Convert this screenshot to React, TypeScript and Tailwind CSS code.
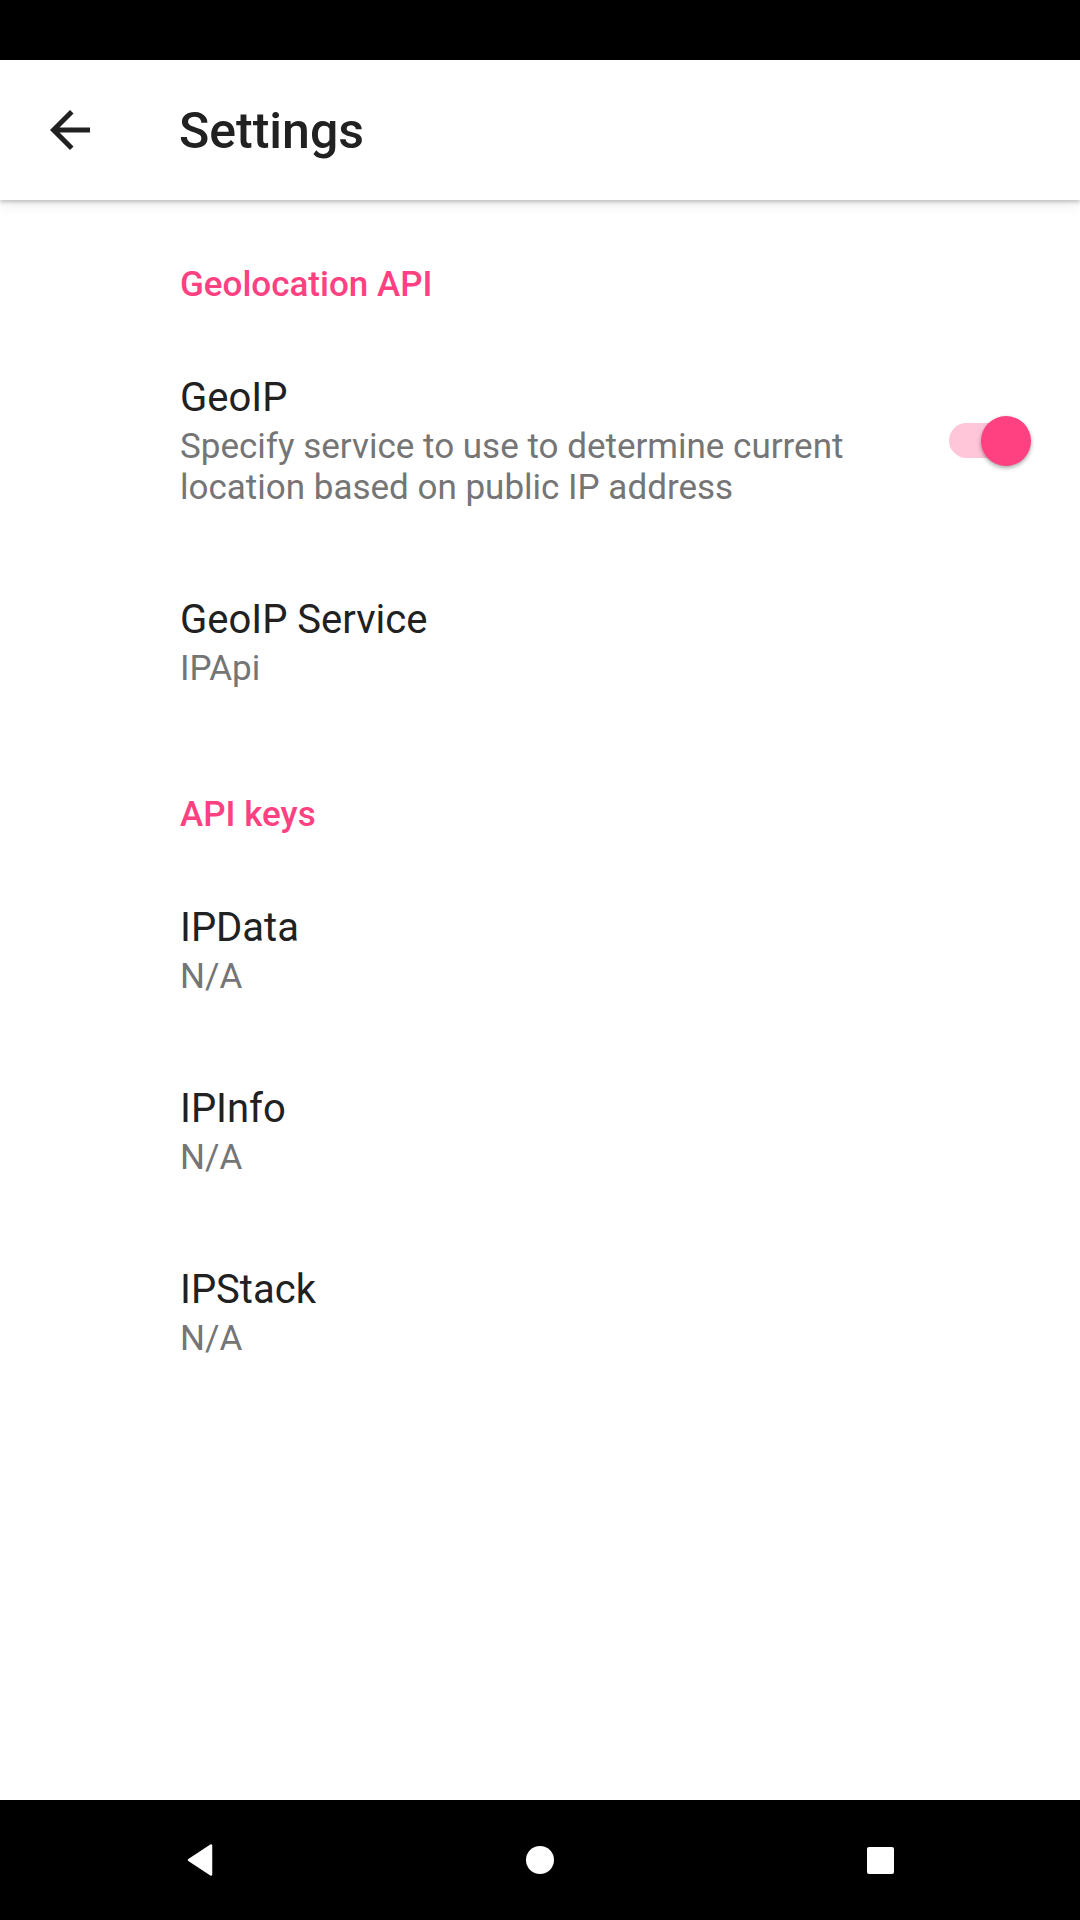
import { useState } from "react";

const font = { fontFamily: "Roboto, 'Noto Sans', sans-serif" };

function Category({ title }: { title: string }) {
    return (
        <div className="pl-[180px] pt-[62px] pb-[24px]">
            <p className="text-[35px] leading-[41px] font-medium text-[#FF4081]">
                {title}
            </p>
        </div>
    );
}

function PrefRow({
    title,
    summary,
    children,
}: {
    title: string;
    summary: string;
    children?: React.ReactNode;
}) {
    return (
        <div className="flex flex-row items-center pl-[180px] pt-[45px] pb-[43px]">
            <div className="flex-1 pr-[100px]">
                <p className="text-[40px] leading-[47px] text-[#212121]">
                    {title}
                </p>
                <p className="mt-[5px] text-[35px] leading-[41px] text-[#757575]">
                    {summary}
                </p>
            </div>
            {children}
        </div>
    );
}

function Toggle({ on, onChange }: { on: boolean; onChange: () => void }) {
    return (
        <button
            onClick={onChange}
            className="relative w-[82px] h-[50px] mr-[49px] shrink-0"
        >
            <span
                className={`absolute left-0 top-[7px] w-[80px] h-[35px] rounded-full ${
                    on ? "bg-[#FFC6D9]" : "bg-[#bdbdbd]"
                }`}
            />
            <span
                className={`absolute top-0 w-[50px] h-[50px] rounded-full shadow-[0_2px_4px_rgba(0,0,0,0.35)] ${
                    on ? "right-0 bg-[#FF4081]" : "left-0 bg-[#f1f1f1]"
                }`}
            />
        </button>
    );
}

export default function App() {
    const [geoIp, setGeoIp] = useState(true);

    return (
        <div className="w-[1080px] h-[1920px] flex flex-col bg-white" style={font}>
            <div className="h-[60px] bg-black shrink-0" />

            <div className="relative z-10 h-[140px] shrink-0 flex flex-row items-center bg-white shadow-[0_2px_4px_rgba(0,0,0,0.22),0_4px_14px_rgba(0,0,0,0.08)]">
                <button className="ml-[40px] w-[60px] h-[60px]">
                    <svg viewBox="0 0 24 24" width="60" height="60">
                        <path
                            fill="#212121"
                            d="M20 11H7.83l5.59-5.59L12 4l-8 8 8 8 1.41-1.41L7.83 13H20v-2z"
                        />
                    </svg>
                </button>
                <h1 className="ml-[79px] mt-[2px] text-[50px] font-medium text-[#212121]">
                    Settings
                </h1>
            </div>

            <div className="flex-1 pt-[2px]">
                <Category title="Geolocation API" />
                <PrefRow
                    title="GeoIP"
                    summary="Specify service to use to determine current location based on public IP address"
                >
                    <Toggle on={geoIp} onChange={() => setGeoIp((p) => !p)} />
                </PrefRow>
                <PrefRow title="GeoIP Service" summary="IPApi" />

                <Category title="API keys" />
                <PrefRow title="IPData" summary="N/A" />
                <PrefRow title="IPInfo" summary="N/A" />
                <PrefRow title="IPStack" summary="N/A" />
            </div>

            <div className="h-[120px] shrink-0 bg-black flex flex-row justify-center items-center">
                <div className="w-[340px] flex justify-center">
                    <svg width="28" height="34" viewBox="0 0 28 34">
                        <path
                            d="M25 2.5 L25 31.5 L3 17 Z"
                            fill="white"
                            stroke="white"
                            strokeWidth="2.5"
                            strokeLinejoin="round"
                        />
                    </svg>
                </div>
                <div className="w-[340px] flex justify-center">
                    <div className="w-[28px] h-[28px] rounded-full bg-white" />
                </div>
                <div className="w-[340px] flex justify-center">
                    <div className="w-[27px] h-[27px] rounded-[2px] bg-white" />
                </div>
            </div>
        </div>
    );
}
